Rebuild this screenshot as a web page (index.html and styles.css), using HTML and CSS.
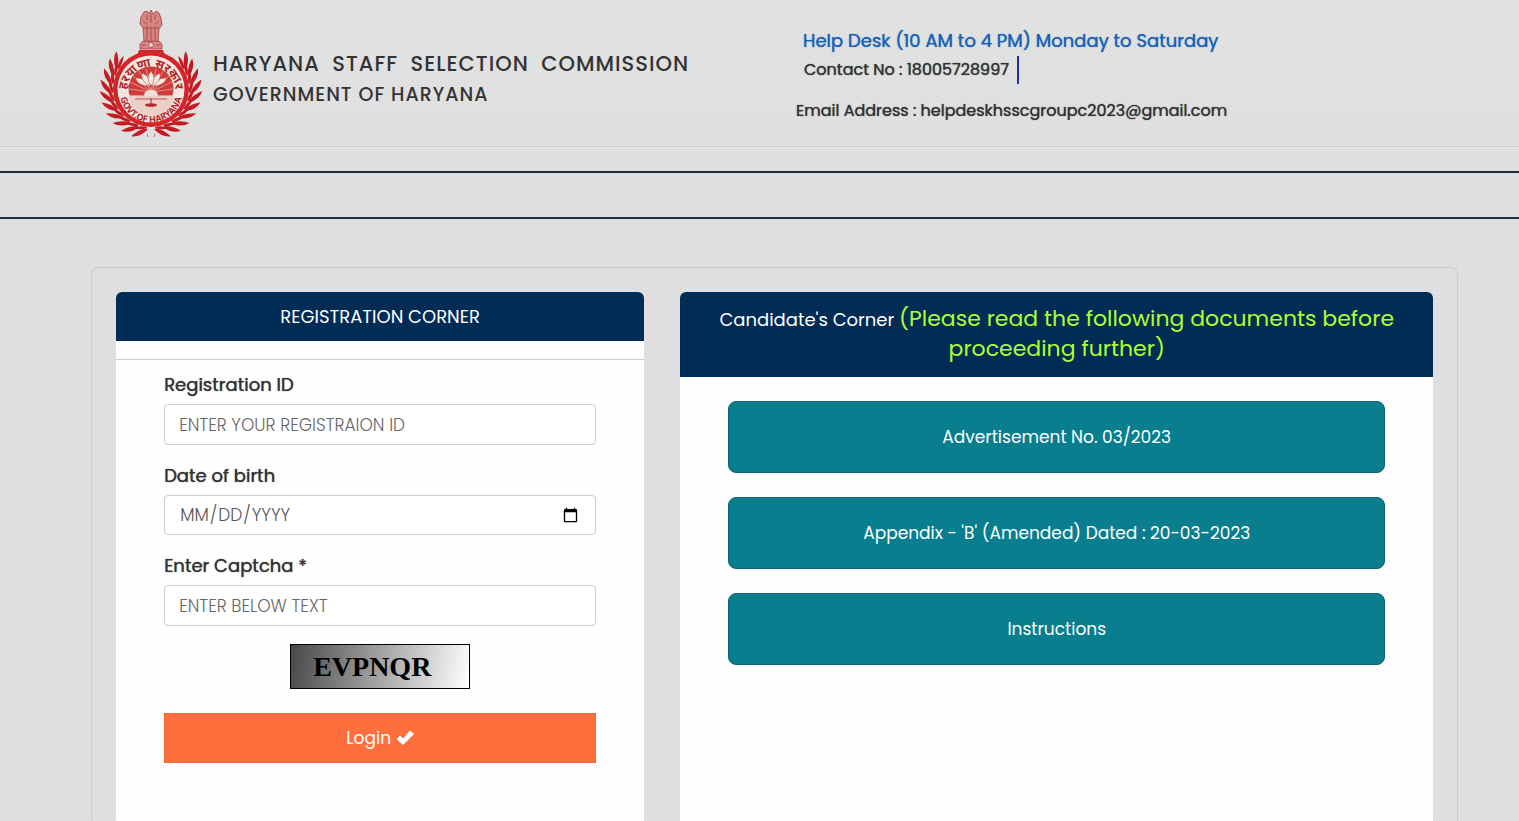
FILE: index.html
```
<!DOCTYPE html>
<html lang="en">
<head>
<meta charset="utf-8">
<meta name="viewport" content="width=device-width, initial-scale=1">
<title>Haryana Staff Selection Commission</title>
<link rel="stylesheet" href="styles.css">
</head>
<body>
<header class="site-header">
  <div class="brand">
    <svg class="emblem" viewBox="9 9 104 130" role="img" aria-label="Government of Haryana emblem">
      <defs>
        <g id="sprig">
          <path d="M-38 7 Q-43 2 -42.500 -7 Q-38.500 -2 -37.500 5Z"/>
          <path d="M-39.500 8 Q-49.500 3 -51 -6 Q-43.500 -2 -39 6Z"/>
        </g>
        <g id="branch">
          <use href="#sprig" transform="rotate(-74)"/>
          <use href="#sprig" transform="rotate(-61)"/>
          <use href="#sprig" transform="rotate(-48)"/>
          <use href="#sprig" transform="rotate(-35)"/>
          <use href="#sprig" transform="rotate(-22)"/>
          <use href="#sprig" transform="rotate(-9)"/>
          <use href="#sprig" transform="rotate(4)"/>
          <use href="#sprig" transform="rotate(17)"/>
          <use href="#sprig" transform="rotate(30)"/>
          <use href="#sprig" transform="rotate(41)"/>
        </g>
        <path id="arc-top" d="M36.500 92a24.500 25 0 0 1 49 0"/>
        <path id="arc-bottom" d="M29.500 91a31.500 31.500 0 0 0 63 0"/>
      </defs>
      <g transform="translate(61 89)" fill="#c41a22">
        <use href="#branch"/>
        <use href="#branch" transform="scale(-1 1)"/>
      </g>
      <path d="M49 50h24q1 8 15 14H34q14-6 15-14z" fill="#d32427"/>
      <path d="M51 53h20" stroke="#f0b0a8" stroke-width="1.500" stroke-dasharray="5 1"/>
      <g fill="#d38683" stroke="#a93c3c" stroke-width=".8">
        <path d="M50 49v-5l3-3h16l3 3v5z"/>
        <path d="M54 41l-1-13-3-4 1-7 3-5 3-1 2 3 2-4 2 4 3-3 3 2 2 5 1 7-3 4-1 12z"/>
        <path d="M53 21l4 3M69 21l-4 3M57 15v5M65 15v5M61 14v9M57 26v14M61 27v13M65 26v14M53 28h16M52 45h4M66 45h4" fill="none"/>
        <circle cx="61" cy="45" r="2.500" fill="#eadbd7"/>
      </g>
      <circle cx="61" cy="89" r="38" fill="#d32427"/>
      <circle cx="61" cy="89" r="33.500" fill="#f2e6e1"/>
      <circle cx="61" cy="89" r="22.500" fill="#cf3b38"/>
      <path d="M38.500 95a22.500 22.500 0 0 0 45 0z" fill="#ecd0c8"/>
      <g stroke="#f0c7bf" stroke-width=".6">
        <path d="M61 92L40 82M61 92L43 76M61 92L49 71M61 92L56 69M61 92L66 69M61 92L73 71M61 92L79 76M61 92L82 82M61 92L39 89M61 92L83 89"/>
      </g>
      <path d="M40 95h42M45 99h32" stroke="#c9504b" stroke-width="1"/>
      <g fill="#f4ebe7" stroke="#b5443f" stroke-width=".6">
        <path d="M61 86Q49 87 45 78q9-1 16 8zM61 86q12 1 16-8-9-1-16 8z"/>
        <path d="M61 86Q50 82 52 73q8 3 9 13zM61 86q11-4 9-13-8 3-9 13z"/>
        <path d="M61 86q-6-8 0-15 6 7 0 15z"/>
      </g>
      <path d="M54 96q0-6 7-6t7 6z" fill="#f3dfd9"/>
      <ellipse cx="61" cy="105" rx="6" ry="1.800" fill="#b2262a"/>
      <path d="M61 98v7" stroke="#b2262a"/>
      <g class="emblem-text">
        <text font-size="12"><textPath href="#arc-top" startOffset="50%">हरयाणा सरकार</textPath></text>
        <text font-size="9"><textPath href="#arc-bottom" startOffset="50%">GOVT.OF HARYANA</textPath></text>
      </g>
      <path d="M57 134l1 3M65 134l-1 3" stroke="#c0666a"/>
    </svg>
    <div class="titles">
      <h1>HARYANA STAFF SELECTION COMMISSION</h1>
      <h2>GOVERNMENT OF HARYANA</h2>
    </div>
  </div>
  <address class="contact">
    <span class="help">Help Desk (10 AM to 4 PM) Monday to Saturday</span>
    <span class="phone">Contact No : 18005728997</span>
    <span class="email">Email Address : helpdeskhsscgroupc2023@gmail.com</span>
  </address>
</header>
<div class="divider"></div>
<div class="nav-band"></div>
<main class="panel">
  <section class="card">
    <h3 class="card-head">REGISTRATION CORNER</h3>
    <div class="strip"></div>
    <form class="login">
      <label for="reg">Registration ID</label>
      <input id="reg" type="text" placeholder="ENTER YOUR REGISTRAION ID">
      <label for="dob">Date of birth</label>
      <input id="dob" type="date">
      <label for="captcha">Enter Captcha *</label>
      <input id="captcha" type="text" placeholder="ENTER BELOW TEXT">
      <div class="captcha">EVPNQR</div>
      <button class="submit" type="button">Login
        <svg viewBox="0 0 18 16" width="18" height="16" aria-hidden="true"><path d="M1 9l3-3 3 3 7-8 3.500 3L7 14.500z" fill="#fff" stroke="#fff" stroke-linejoin="round"/></svg>
      </button>
    </form>
  </section>
  <section class="card">
    <h3 class="card-head candidate">Candidate's Corner <span class="note">(Please read the following documents before proceeding further)</span></h3>
    <nav class="documents">
      <a href="#advertisement">Advertisement No. 03/2023</a>
      <a href="#appendix">Appendix - 'B' (Amended) Dated : 20-03-2023</a>
      <a href="#instructions">Instructions</a>
    </nav>
  </section>
</main>
</body>
</html>
```
FILE: styles.css
```
* { box-sizing: border-box; }

body {
  margin: 0;
  height: 100vh;
  overflow: hidden;
  display: flex;
  flex-direction: column;
  font-family: Poppins, Inter, sans-serif;
  font-size: 16px;
  color: #333;
  background:
    conic-gradient(rgba(255, 255, 255, .14) 25%, transparent 0 50%, rgba(255, 255, 255, .14) 0 75%, transparent 0) 0 0 / 4px 4px,
    linear-gradient(#dedfde, #dddcde 220px, #dedcdf);
}

h1, h2, h3 { margin: 0; font-weight: 500; }

.site-header {
  display: grid;
  grid-template-columns: 697fr 723fr;
  padding: 9px 0 7px 99px;
  border-bottom: 1px solid #c9c9c9;
}

.brand { display: flex; align-items: flex-start; gap: 10px; }
.emblem { width: 104px; height: 130px; flex: none; }
.emblem-text { font-family: "Noto Sans", sans-serif; font-weight: 700; fill: #b3252a; text-anchor: middle; }
.titles { padding-top: 39px; white-space: nowrap; }
h1 { font-size: 21px; line-height: 31px; letter-spacing: 1px; word-spacing: 6px; }
h2 { font-size: 19px; line-height: 31px; letter-spacing: 1px; }

.contact {
  display: flex;
  flex-direction: column;
  align-items: flex-start;
  font-style: normal;
  white-space: nowrap;
  font-size: 16px;
  padding-top: 17px;
}
.contact, .login label { font-weight: 400; text-shadow: 0 0 1px currentColor; }
.help { font-size: 18px; line-height: 30px; color: #1b62b5; padding-left: 7px; }
.phone { line-height: 28px; margin: 0 0 13px 8px; padding-right: 8px; border-right: 2px solid #2030a8; }
.email { line-height: 28px; }

.divider { height: 26px; flex: none; border-top: 1px solid #e9e9e9; border-bottom: 2px solid #1f303c; }
.nav-band { height: 46px; flex: none; border-bottom: 2px solid #1f303c; }

.panel {
  flex: 1;
  min-height: 0;
  display: grid;
  grid-template-columns: 528fr 753fr;
  gap: 36px;
  margin: 48px 4% 0 6%;
  padding: 24px 24px 0;
  border: 1px solid #ccc;
  border-bottom: 0;
  border-radius: 8px 8px 0 0;
}

.card { background: #fefefe; border-radius: 6px 6px 0 0; overflow: hidden; }
.card-head {
  padding: 10px 24px;
  background: #002c56;
  color: #fff;
  font-size: 18px;
  font-weight: 400;
  line-height: 29px;
  text-align: center;
}
.candidate { padding: 13px 24px 12px; line-height: 30px; }
.note { font-size: 22px; line-height: 24px; color: #adff2f; }
.strip { height: 19px; border-bottom: 1px solid #ccc; }

.login { display: flex; flex-direction: column; padding: 12px 48px; }
.login label { font-size: 18px; line-height: 26px; margin-bottom: 6px; }
.login input {
  width: 100%;
  height: 41px;
  margin-bottom: 18px;
  padding: 6px 14px;
  border: 1px solid #ccc;
  border-radius: 4px;
  background: #fff;
  color: #555;
  font: 300 17px/26px Poppins, Inter, sans-serif;
}
.login input[type="date"] { height: 40px; }
.login input::placeholder { color: #666; opacity: 1; }
.login input::-webkit-datetime-edit { text-transform: uppercase; }

.captcha {
  align-self: center;
  width: 180px;
  height: 45px;
  padding-left: 22px;
  border: 1px solid #000;
  background: linear-gradient(100deg, #484848, #fff);
  color: #000;
  font: 700 28px/43px "Liberation Serif", serif;
}
.submit {
  display: flex;
  align-items: center;
  justify-content: center;
  gap: 5px;
  height: 50px;
  margin-top: 24px;
  border: 1px solid #f06a38;
  background: #ff6f3d;
  color: #fff;
  font: 400 17px/26px Poppins, Inter, sans-serif;
}

.documents { display: flex; flex-direction: column; gap: 24px; padding: 24px 48px; }
.documents a {
  padding: 22px;
  border: 1px solid #126570;
  border-radius: 8px;
  background: #087e8f;
  color: #fff;
  font-size: 17px;
  line-height: 26px;
  text-align: center;
  text-decoration: none;
}
```
